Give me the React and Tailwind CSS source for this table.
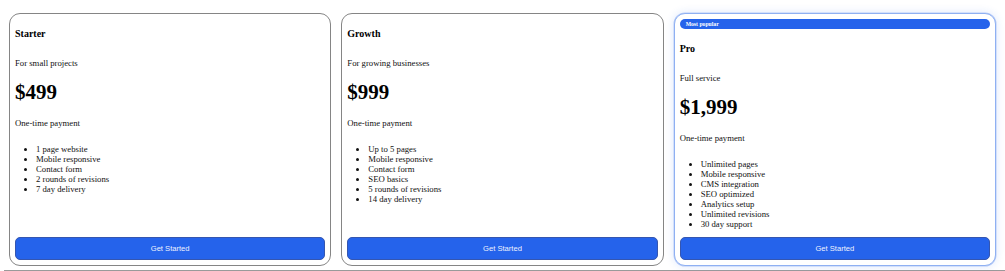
import React from 'react';

const plans = [
  {
    name: 'Starter',
    blurb: 'For small projects',
    price: '$499',
    features: ['1 page website', 'Mobile responsive', 'Contact form', '2 rounds of revisions', '7 day delivery'],
  },
  {
    name: 'Growth',
    blurb: 'For growing businesses',
    price: '$999',
    features: ['Up to 5 pages', 'Mobile responsive', 'Contact form', 'SEO basics', '5 rounds of revisions', '14 day delivery'],
  },
  {
    name: 'Pro',
    blurb: 'Full service',
    price: '$1,999',
    popular: true,
    features: [
      'Unlimited pages',
      'Mobile responsive',
      'CMS integration',
      'SEO optimized',
      'Analytics setup',
      'Unlimited revisions',
      '30 day support',
    ],
  },
];

function PlanCard({ plan }) {
  return (
    <div
      className={`flex flex-col rounded-[11px] border px-[5px] pt-[5px] pb-[5px] bg-white ${
        plan.popular
          ? 'border-[#8fb0f2] shadow-[0_0_10px_rgba(37,99,235,0.16)] ring-[0.5px] ring-[#b7ccf7]'
          : 'border-[#858585]'
      }`}
    >
      {plan.popular && (
        <span className="mb-[5px] h-[10px] rounded-full bg-[#2563eb] pl-[6px] text-[5.7px] font-bold leading-[10px] text-white">
          Most popular
        </span>
      )}
      <h3 className="mt-[9px] text-[10px] font-bold leading-[12px] text-black">{plan.name}</h3>
      <p className="mt-[18px] text-[8.7px] leading-[10px] text-[#111]">{plan.blurb}</p>
      <div className="mt-[12px] text-[21px] font-bold leading-[24px] text-black">{plan.price}</div>
      <p className="mt-[14px] text-[8.7px] leading-[10px] text-[#111]">One-time payment</p>
      <ul className="mt-[16px] mb-[8px] list-disc pl-[21px] text-[8.7px] leading-[10px] text-[#111]">
        {plan.features.map((f) => (
          <li key={f}>{f}</li>
        ))}
      </ul>
      <button
        className="mt-auto h-[23px] w-full shrink-0 rounded-[5px] border border-[#3556b0] bg-[#2563eb] text-[7.6px] text-[#eef2ff]"
        style={{ fontFamily: '"Liberation Sans", Arial, sans-serif' }}
      >
        Get Started
      </button>
    </div>
  );
}

export default function App() {
  return (
    <div className="min-h-[271px] bg-white pl-[4px]" style={{ fontFamily: '"Liberation Serif", "Times New Roman", serif' }}>
      <div className="grid grid-cols-3 gap-[10px] border-b border-[#9a9a9a] pl-[5px] pr-[9px] pt-[13px] pb-[4px]">
        {plans.map((p) => (
          <PlanCard key={p.name} plan={p} />
        ))}
      </div>
    </div>
  );
}
